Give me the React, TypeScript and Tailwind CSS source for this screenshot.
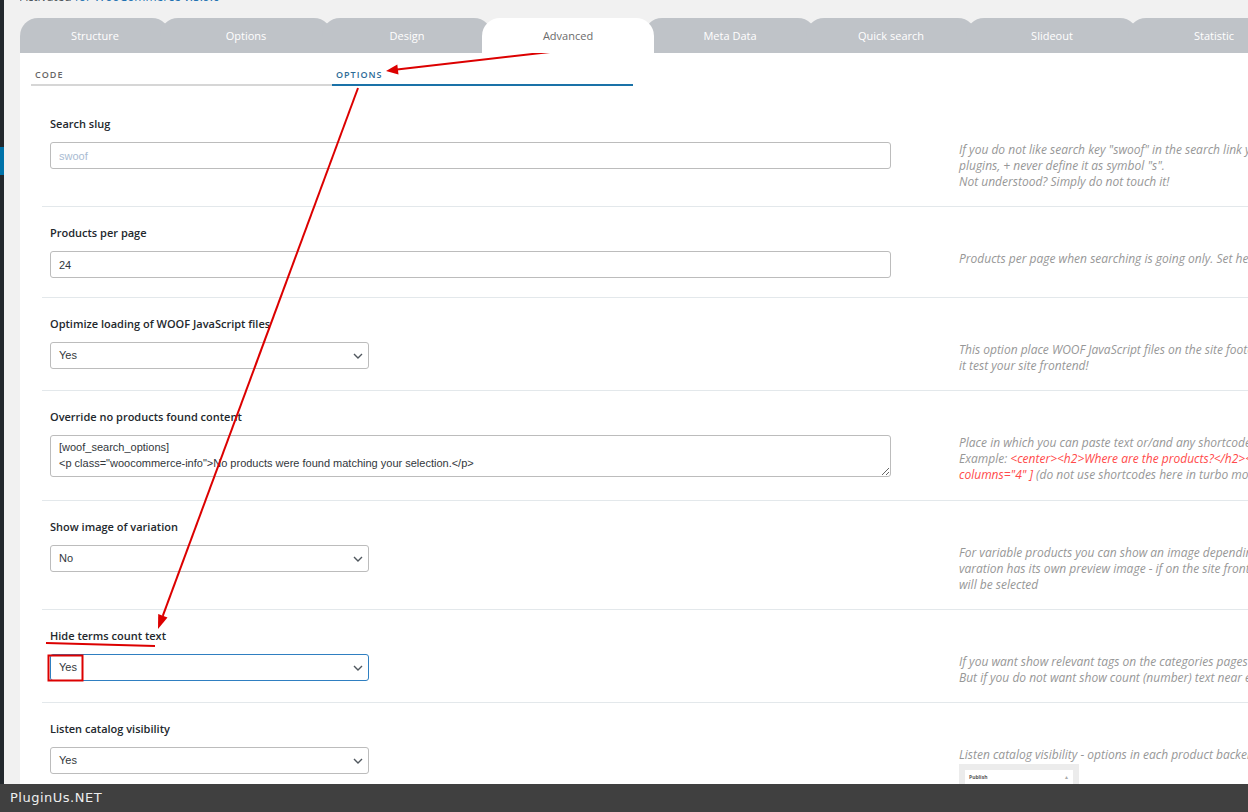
import React from 'react'

const tabs = [
  { label: 'Structure', w: 'w-[150px]' },
  { label: 'Options', w: 'w-[172px]' },
  { label: 'Design', w: 'w-[170px]' },
  { label: 'Advanced', w: 'w-[172px]', active: true },
  { label: 'Meta Data', w: 'w-[172px]' },
  { label: 'Quick search', w: 'w-[170px]' },
  { label: 'Slideout', w: 'w-[172px]' },
  { label: 'Statistic', w: 'w-[172px]' },
]

function Chevron() {
  return (
    <svg width="10" height="6" viewBox="0 0 10 6" className="shrink-0">
      <path d="M1 1l4 4 4-4" fill="none" stroke="#50575e" strokeWidth="1.4" />
    </svg>
  )
}

function Select({ value, focused }: { value: string; focused?: boolean }) {
  return (
    <div
      className={`w-[319px] h-[27px] mb-[5px] rounded-[3px] border flex items-center justify-between pl-2 pr-[5px] text-[11px] text-[#32373c] font-['Liberation_Sans',Arial,sans-serif] bg-white ${
        focused ? 'border-[#2f7fc1]' : 'border-[#bcbcbc]'
      }`}
    >
      <span>{value}</span>
      <Chevron />
    </div>
  )
}

function TextInput({ value, placeholder }: { value?: string; placeholder?: string }) {
  return (
    <input
      readOnly
      value={value ?? ''}
      placeholder={placeholder}
      className="block w-full h-[27px] mb-[3px] rounded-[3px] border border-[#bcbcbc] px-2 text-[11px] text-[#32373c] placeholder:text-[#a9bbd2] font-['Liberation_Sans',Arial,sans-serif] outline-none"
    />
  )
}

function Row({ label, control, children, last }: { label: string; control: React.ReactNode; children: React.ReactNode; last?: boolean }) {
  return (
    <div className={`flex pl-2 pt-[17px] pb-[16px] ${last ? '' : 'border-b border-[#e3e8eb]'}`}>
      <div className="w-[841px] shrink-0">
        <div className="text-[11px] leading-[17px] font-semibold text-[#23282d] mb-[10px]">{label}</div>
        {control}
      </div>
      <div className="ml-[68px] pt-[27px] flex-1 min-w-0 whitespace-nowrap text-[12px] italic leading-[16px] text-[#979797]">
        {children}
      </div>
    </div>
  )
}

export default function App() {
  return (
    <div className="relative h-[812px] flex flex-col overflow-hidden bg-[#f1f1f1] font-['Open_Sans',sans-serif]">
      <div className="flex flex-1 min-h-0">
        {/* admin sidebar edge */}
        <div className="w-[4px] shrink-0 flex flex-col bg-[#23282d]">
          <div className="h-[147px]" />
          <div className="h-[28px] bg-[#0073aa]" />
        </div>

        <div className="flex-1 min-w-0 overflow-hidden pl-4">
          <div className="h-[18px] overflow-hidden">
            <div className="-mt-[9px] text-[12px] leading-[12px] text-[#50575e]">
              Activated <span className="text-[#2271b1]">for WooCommerce v.5.9.0</span>
            </div>
          </div>

          {/* main tabs */}
          <div className="flex h-[35px]">
            {tabs.map((t, i) => (
              <div
                key={t.label}
                className={`relative shrink-0 h-[35px] pt-[1px] rounded-t-[18px] flex items-center justify-center text-[11px] ${t.w} ${
                  i > 0 ? '-ml-[10px]' : ''
                } ${t.active ? 'bg-white text-[#6b6b6b] z-10' : 'bg-[#bfc3c8] text-white'}`}
              >
                {t.label}
              </div>
            ))}
          </div>

          <div className="bg-white pb-10">
            {/* sub tabs */}
            <div className="ml-[11px] flex">
              <div className="w-[301px] pt-[16px] pb-[3px] pl-[4px] border-b-2 border-[#d6d6d6] text-[9px] leading-[12px] font-semibold tracking-[1px] text-[#666]">
                CODE
              </div>
              <div className="w-[301px] pt-[16px] pb-[3px] pl-[4px] border-b-2 border-[#1a72a8] text-[9px] leading-[12px] font-semibold tracking-[1px] text-[#2d6a96]">
                OPTIONS
              </div>
            </div>

            <div className="ml-[22px] mt-[12px]">
              <Row label="Search slug" control={<TextInput placeholder="swoof" />}>
                If you do not like search key "swoof" in the search link you can replace it by your own word. But be care to avoid conflicts with any themes and
                <br />
                plugins, + never define it as symbol "s".
                <br />
                Not understood? Simply do not touch it!
              </Row>

              <Row label="Products per page" control={<TextInput value="24" />}>
                Products per page when searching is going only. Set here -1 to prevent pagination managing from here!
              </Row>

              <Row label="Optimize loading of WOOF JavaScript files" control={<Select value="Yes" />}>
                This option place WOOF JavaScript files on the site footer. Use it for page loading optimization. Be careful - after enabling of
                <br />
                it test your site frontend!
              </Row>

              <Row
                label="Override no products found content"
                control={
                  <textarea
                    readOnly
                    value={'[woof_search_options]\n<p class="woocommerce-info">No products were found matching your selection.</p>'}
                    className="block w-full h-[42px] mb-[7px] rounded-[3px] border border-[#bcbcbc] px-2 py-[3px] text-[11px] leading-[16px] text-[#32373c] font-['Liberation_Sans',Arial,sans-serif] outline-none"
                  />
                }
              >
                Place in which you can paste text or/and any shortcodes which will be displayed when no products found. Can be used for displaying recommended products.
                <br />
                Example:{' '}
                <span className="text-[#ff4a4a]">
                  &lt;center&gt;&lt;h2&gt;Where are the products?&lt;/h2&gt;&lt;/center&gt;&lt;h4&gt;You can look at our other products:&lt;/h4&gt;[recent_products per_page="4"
                </span>
                <br />
                <span className="text-[#ff4a4a]">columns="4" ]</span> (do not use shortcodes here in turbo mode)
              </Row>

              <Row label="Show image of variation" control={<Select value="No" />}>
                For variable products you can show an image depending of the current selected variation. It works in such way: if each product
                <br />
                varation has its own preview image - if on the site front will be selected attribute the image of the variation
                <br />
                will be selected
              </Row>

              <Row label="Hide terms count text" control={<Select value="Yes" focused />}>
                If you want show relevant tags on the categories pages you should activate show count, dynamic recount and hide empty terms in the tab Options.
                <br />
                But if you do not want show count (number) text near each term set Yes here.
              </Row>

              <Row label="Listen catalog visibility" control={<Select value="Yes" />} last>
                Listen catalog visibility - options in each product backend page in 'Publish' sidebar widget.
                <div className="mt-[1px] w-[120px] h-[40px] bg-[#ececec] px-[6px] pt-[6px] not-italic">
                  <div className="h-[14px] bg-white flex items-center justify-between px-[4px] text-[5px] font-bold text-[#555]">
                    <span>Publish</span>
                    <span className="text-[#aaa]">▲</span>
                  </div>
                </div>
              </Row>
            </div>
          </div>
        </div>
      </div>

      <div className="h-[28px] shrink-0 bg-[#404040] flex items-center pl-[10px] text-[13px] tracking-[0.5px] text-[#eeeeee] font-['DejaVu_Sans',sans-serif]">
        PluginUs.NET
      </div>

      {/* red annotations drawn over the screenshot */}
      <svg className="absolute top-0 left-0 pointer-events-none" width="1248" height="812" viewBox="0 0 1248 812">
        <line x1="550" y1="52" x2="397" y2="69.6" stroke="#dc0000" strokeWidth="2" />
        <polygon points="386,71 398.5,74.6 397.3,64.6" fill="#dc0000" />
        <line x1="358" y1="88" x2="162.8" y2="615.9" stroke="#dc0000" strokeWidth="2" />
        <polygon points="158,629 167.5,617.6 158.2,614.1" fill="#dc0000" />
        <line x1="46" y1="643" x2="155" y2="646" stroke="#dc0000" strokeWidth="2" />
        <rect x="48.5" y="655.5" width="34" height="25" fill="none" stroke="#dc0000" strokeWidth="2" />
      </svg>
    </div>
  )
}
